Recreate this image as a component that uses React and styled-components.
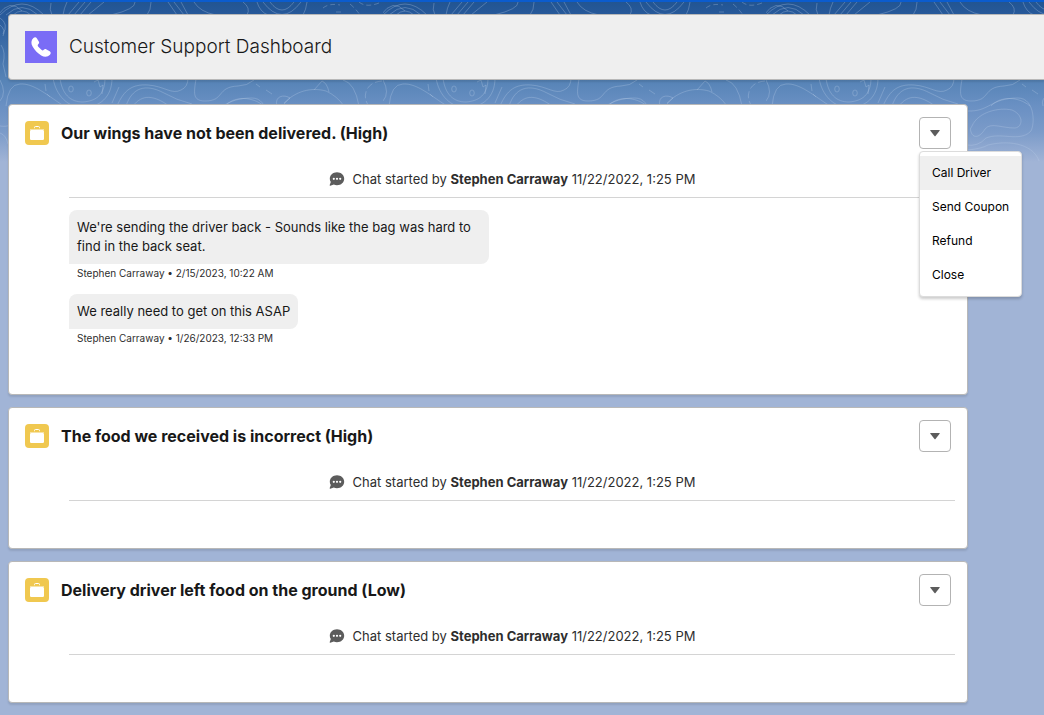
import { useState } from "react";
import styled, { createGlobalStyle } from "styled-components";

const TICKETS = [
  {
    id: 1,
    title: "Our wings have not been delivered. (High)",
    messages: [
      {
        body: "We're sending the driver back - Sounds like the bag was hard to find in the back seat.",
        meta: "Stephen Carraway • 2/15/2023, 10:22 AM",
      },
      {
        body: "We really need to get on this ASAP",
        meta: "Stephen Carraway • 1/26/2023, 12:33 PM",
      },
    ],
  },
  { id: 2, title: "The food we received is incorrect (High)", messages: [] },
  { id: 3, title: "Delivery driver left food on the ground (Low)", messages: [] },
];

const ACTIONS = ["Call Driver", "Send Coupon", "Refund", "Close"];

const PhoneIcon = () => (
  <svg width="32" height="32" viewBox="0 0 32 32" fill="#fff" aria-hidden="true">
    <path d="M8.4 7.1C9.4 6 11 6 11.8 7.2L13.8 10.4C14.4 11.4 14.2 12.4 13.4 13.1C12.4 14 12.6 14.8 13.3 15.7L16.4 18.8C17.4 19.6 18 19.6 18.8 18.7C19.5 17.9 20.5 17.8 21.5 18.4L24.7 20.3C26 21.2 26 22.6 25 23.7C22.8 26 19.5 26.3 16.2 24.4C12.5 22.2 9.5 19.2 7.6 15.6C5.8 12.4 6 9.4 8.4 7.1Z" />
  </svg>
);

const CaseIcon = () => (
  <svg width="24" height="24" viewBox="0 0 24 24" fill="none" aria-hidden="true">
    <path d="M9.5 7.2V6.5Q9.5 5.5 10.5 5.5H13.5Q14.5 5.5 14.5 6.5V7.2" stroke="#fff" strokeWidth="1" />
    <path d="M5.5 8.5H19" stroke="#fff" strokeWidth="1" strokeDasharray="1 1" />
    <rect x="5" y="9" width="14" height="10" rx="1.2" fill="#fff" />
  </svg>
);

const ChatIcon = () => (
  <svg width="16" height="16" viewBox="0 0 16 16" aria-hidden="true">
    <path
      d="M8 1.2C12.1 1.2 15.2 4.1 15.2 7.7S12.1 14.2 8 14.2C6.8 14.2 5.7 14 4.8 13.5L1.3 14.7C.8 14.9.5 14.5.7 14L1.8 11C1.1 10 .8 8.9 .8 7.7C.8 4.1 3.9 1.2 8 1.2Z"
      fill="#5c5c5c"
    />
    <circle cx="4.8" cy="7.8" r="1.1" fill="#fff" />
    <circle cx="8" cy="7.8" r="1.1" fill="#fff" />
    <circle cx="11.2" cy="7.8" r="1.1" fill="#fff" />
  </svg>
);

const CaretIcon = () => (
  <svg width="10" height="7" viewBox="0 0 10 7" fill="#5c5c5c" aria-hidden="true">
    <path d="M.7 0H9.3Q10.2 0 9.6 .8L5.5 6Q5 6.6 4.5 6L.4 .8Q-.2 0 .7 0Z" />
  </svg>
);

const Topography = () => (
  <Backdrop aria-hidden="true">
    <defs>
      <pattern id="contours" width="383" height="170" patternUnits="userSpaceOnUse">
        <g fill="none" stroke="#b9cdea" strokeWidth="1" strokeOpacity=".3">
          {/* upper edge */}
          <path d="M-2 15Q10 -2 22 11M0 15Q22 -7 44 15M6 15Q22 0 38 15M13 15Q22 7 31 15" />
          <path d="M51 3Q49 10 52 15M63 15Q64 8 67 2M68 15L79 2M74 15L85 2M80 15L91 2M88 15L104 2" />
          <path d="M135 2Q136 9 111 15M151 2Q151 10 147 15M168 2L177 15M174 2L184 15M181 2L188 15M194 2Q200 12 216 15" />
          <path d="M243 2Q251 8 247 15M257 2Q260 12 268 15M263 2Q282 27 301 2M270 2Q282 18 294 2M307 2Q306 10 303 15" />
          <path d="M323 8Q329 3 340 5M336 12H344M350 4Q356 9 360 15M359 2Q366 8 379 3" strokeDasharray="5 3" />
          {/* bands between the header and the cards */}
          <path d="M6 106Q8 84 20 84C34 83 48 96 64 106" />
          <path d="M45 84L46 91M47 94L50 97" />
          <path d="M53 78C56 96 68 107 83 108C99 107 112 98 112 78" />
          <path d="M60 78C62 94 70 102 83 102C96 101 105 95 105 78" />
          <path d="M94 82L98 80L100 87L103 85L102 94" />
          <ellipse cx="71" cy="89" rx="2.3" ry="3" />
          <ellipse cx="89" cy="93" rx="2.3" ry="3" />
          <path d="M117 106C124 90 132 84 148 85C164 86 172 95 181 90Q188 87 188 78" />
          <path d="M126 106C132 88 145 83 164 93Q176 100 192 104" />
          <path d="M133 106C142 94 154 95 169 106M112 103L119 87" />
          <path d="M196 79C194 92 192 101 205 101C225 101 216 87 238 86Q247 86 254 80" />
          <path d="M256 84L260 87M266 90L272 94M225 106C234 96 252 96 264 106" />
          <path d="M277 106C274 96 284 94 290 98L282 106M284 103C296 91 311 87 326 91Q337 96 344 106" />
          <path d="M314 90L322 81Q327 83 329 92M343 80Q355 83 359 106" />
          <path d="M382 81Q369 82 366 92Q364 98 368 105" strokeDasharray="7 3" />
          {/* lower basin */}
          <path d="M201 111C224 112 224 98 252 98C270 98 269 128 264 132C253 142 235 132 220 138Q212 147 200 145" />
          <path d="M206 126C212 112 233 107 246 110C258 115 257 127 249 128C235 128 225 122 219 129C215 136 208 140 205 132Q203 129 206 126Z" />
          <path d="M201 150Q215 149 222 145C247 139 268 146 273 161" />
          {/* left rings */}
          <path d="M0 18Q9 24 3 34M0 25Q6 30 3 36M1 45Q6 52 3 64L6 77M0 80Q7 93 0 101M0 126Q7 127 9 125M0 133Q6 135 8 144" />
        </g>
      </pattern>
    </defs>
    <rect width="100%" height="170" fill="url(#contours)" />
  </Backdrop>
);

const Ticket = ({ title, messages, open, onToggle }) => (
  <Card>
    <CardHeader>
      <CaseBadge>
        <CaseIcon />
      </CaseBadge>
      <h2>{title}</h2>
      <MenuAnchor>
        <MenuButton type="button" aria-label="Show actions" aria-expanded={open} onClick={onToggle}>
          <CaretIcon />
        </MenuButton>
        {open && (
          <Menu>
            {ACTIONS.map((action, i) => (
              <MenuItem key={action} type="button" $active={i === 0}>
                {action}
              </MenuItem>
            ))}
          </Menu>
        )}
      </MenuAnchor>
    </CardHeader>
    <CardBody>
      <ChatStart>
        <ChatIcon />
        <p>
          Chat started by <b>Stephen Carraway</b> 11/22/2022, 1:25 PM
        </p>
      </ChatStart>
      {messages.length > 0 && (
        <Messages>
          {messages.map(({ body, meta }) => (
            <li key={meta}>
              <Bubble>{body}</Bubble>
              <Meta>{meta}</Meta>
            </li>
          ))}
        </Messages>
      )}
    </CardBody>
  </Card>
);

const App = () => {
  const [openId, setOpenId] = useState(1);

  return (
    <Page>
      <GlobalStyle />
      <Topography />
      <PageHeader>
        <PhoneBadge>
          <PhoneIcon />
        </PhoneBadge>
        <h1>Customer Support Dashboard</h1>
      </PageHeader>
      <TicketList>
        {TICKETS.map((ticket) => (
          <Ticket
            key={ticket.id}
            title={ticket.title}
            messages={ticket.messages}
            open={openId === ticket.id}
            onToggle={() => setOpenId(openId === ticket.id ? null : ticket.id)}
          />
        ))}
      </TicketList>
    </Page>
  );
};

export default App;

const GlobalStyle = createGlobalStyle`
  * {
    box-sizing: border-box;
  }

  body {
    margin: 0;
    background: #a1b4d6;
    color: #181818;
    font-family: Inter, "Liberation Sans", sans-serif;
    font-size: 13px;
  }

  h1, h2, p, ul {
    margin: 0;
    padding: 0;
  }

  button {
    font: inherit;
    color: inherit;
    cursor: pointer;
  }

  svg {
    display: block;
  }
`;

const Page = styled.div`
  position: relative;
  min-height: 100vh;
  padding: 12px 0 8px 8px;
  border-top: 2px solid #0b5cce;
  background: linear-gradient(#225592 0, #27599a 12px, #5683b6 78px, #6a90c3 104px, #7b9bc9 130px, #a1b4d6 160px);
`;

const Backdrop = styled.svg`
  position: absolute;
  top: -2px;
  left: 0;
  width: 100%;
  height: 170px;
  clip-path: inset(2px 0 0 0);
`;

const PageHeader = styled.header`
  position: relative;
  display: flex;
  align-items: center;
  gap: 12px;
  padding: 16px;
  border: 1px solid #b8b8b8;
  border-right: none;
  border-radius: 4px 0 0 4px;
  background: #efefef;
  box-shadow: 0 2px 2px rgba(0, 0, 0, 0.1);

  h1 {
    font-size: 19px;
    font-weight: 300;
    line-height: 32px;
  }
`;

const PhoneBadge = styled.span`
  background: #7a6cf6;
`;

const TicketList = styled.main`
  position: relative;
  display: flex;
  flex-direction: column;
  gap: 12px;
  margin: 24px 76px 0 0;
`;

const Card = styled.article`
  padding: 12px 0 47px;
  border: 1px solid #b8b8b8;
  border-radius: 4px;
  background: #fff;
  box-shadow: 0 2px 2px rgba(0, 0, 0, 0.1);
`;

const CardHeader = styled.header`
  display: flex;
  align-items: center;
  gap: 12px;
  padding: 0 16px;

  h2 {
    flex: 1;
    font-size: 16px;
    font-weight: 700;
    line-height: 20px;
  }
`;

const CaseBadge = styled.span`
  border-radius: 4px;
  background: #f0c850;
`;

const MenuAnchor = styled.div`
  position: relative;
`;

const MenuButton = styled.button`
  display: flex;
  align-items: center;
  justify-content: center;
  width: 32px;
  height: 32px;
  padding: 0;
  border: 1px solid #b3b3b3;
  border-radius: 4px;
  background: #fff;
`;

const Menu = styled.div`
  position: absolute;
  top: 34px;
  left: 0;
  z-index: 1;
  display: flex;
  flex-direction: column;
  min-width: 102px;
  padding: 4px 0;
  border: 1px solid #dcdcdc;
  border-radius: 4px;
  background: #fff;
  box-shadow: 0 2px 3px rgba(0, 0, 0, 0.2);
`;

const MenuItem = styled.button`
  padding: 0 12px;
  border: none;
  background: ${({ $active }) => ($active ? "#efefef" : "transparent")};
  color: #000;
  font-size: 12px;
  line-height: 34px;
  text-align: left;
  white-space: nowrap;

  &:hover {
    background: #efefef;
  }
`;

const CardBody = styled.div`
  margin: 20px 12px 0 60px;
`;

const ChatStart = styled.div`
  display: flex;
  align-items: center;
  justify-content: center;
  gap: 8px;
  padding-bottom: 8px;
  border-bottom: 1px solid #d4d4d4;
  color: #2e2e2e;
  line-height: 20px;
`;

const Messages = styled.ul`
  display: flex;
  flex-direction: column;
  gap: 12px;
  margin-top: 12px;
  list-style: none;
`;

const Bubble = styled.p`
  width: fit-content;
  max-width: 420px;
  padding: 8px;
  border-radius: 8px 8px 8px 0;
  background: #efefef;
  line-height: 19px;
`;

const Meta = styled.p`
  padding: 0 8px;
  color: #2e2e2e;
  font-size: 10px;
  line-height: 18px;
`;
